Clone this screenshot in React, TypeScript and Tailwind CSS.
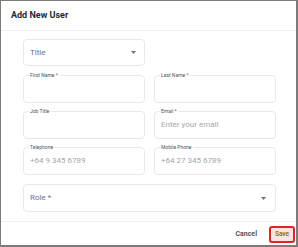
import React from "react";

const font = { fontFamily: "Roboto, 'Liberation Sans', Arial, sans-serif" };

function Caret() {
  return (
    <svg width="5" height="3" viewBox="0 0 5 3" className="shrink-0">
      <path d="M0 0 L5 0 L2.5 3 Z" fill="#6b7280" />
    </svg>
  );
}

function SelectBox({ label, className }: { label: string; className: string }) {
  return (
    <div
      className={`flex items-center justify-between rounded-[4px] border border-[#e8e8ea] pl-[6px] pr-[8px] ${className}`}
    >
      <span className="text-[8px] leading-none text-[#6b7280]">{label}</span>
      <Caret />
    </div>
  );
}

function Field({ label, placeholder }: { label: string; placeholder?: string }) {
  return (
    <div className="relative flex h-[28px] items-center rounded-[4px] border border-[#e8e8ea] pl-[6px]">
      <span className="absolute -top-[3px] left-[5px] bg-white px-[1px] text-[5px] leading-none text-[#4b5563]">
        {label}
      </span>
      {placeholder && (
        <span className="text-[8px] leading-none text-[#a3a8b0]">{placeholder}</span>
      )}
    </div>
  );
}

export default function App() {
  return (
    <div className="h-[247px] w-[298px] bg-[#7b7b7b] pl-[1px] pt-[1px]" style={font}>
      <div className="flex h-[244px] w-[295px] flex-col bg-white">
        <div className="flex h-[30px] items-center border-b border-[#efefef] pl-[10px]">
          <span className="text-[9px] font-bold leading-none text-[#1f2937]">Add New User</span>
        </div>
        <div className="flex h-[190px] flex-col pl-[22px] pt-[8px]">
          <SelectBox label="Title" className="h-[27px] w-[122px]" />
          <div className="mt-[9px] grid w-[253px] grid-cols-2 gap-x-[9px] gap-y-[8px]">
            <Field label="First Name *" />
            <Field label="Last Name *" />
            <Field label="Job Title" />
            <Field label="Email *" placeholder="Enter your email" />
            <Field label="Telephone" placeholder="+64 9 345 6789" />
            <Field label="Mobile Phone" placeholder="+64 27 345 6789" />
          </div>
          <SelectBox label="Role *" className="mt-[9px] h-[28px] w-[253px] pr-[9px]" />
        </div>
        <div className="flex flex-1 items-start justify-end border-t border-[#efefef] pr-[1px] pt-[4px]">
          <span className="mr-[12px] mt-[5px] text-[7px] font-bold leading-none text-[#4b5563]">
            Cancel
          </span>
          <button className="flex h-[17px] w-[26px] items-center justify-center rounded-[3px] border-2 border-[#dc2626] bg-[#fde3e3] text-[6.5px] font-bold leading-none text-[#7f7a2c]">
            Save
          </button>
        </div>
      </div>
    </div>
  );
}
